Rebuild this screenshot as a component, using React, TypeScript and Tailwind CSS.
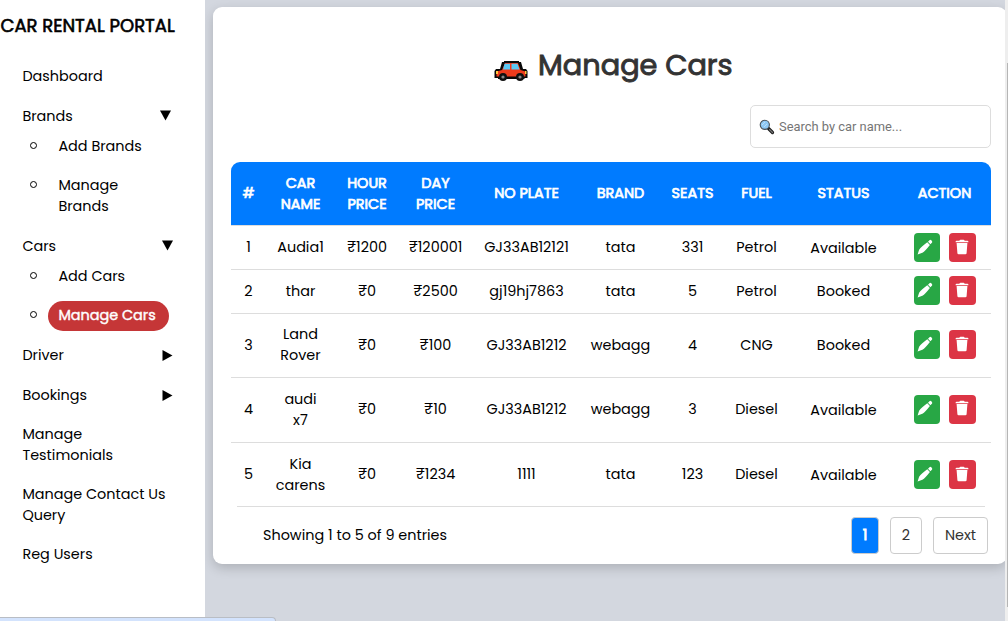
import React from 'react';

const cars = [
  ['1', 'Audia1', '₹1200', '₹120001', 'GJ33AB12121', 'tata', '331', 'Petrol', 'Available'],
  ['2', 'thar', '₹0', '₹2500', 'gj19hj7863', 'tata', '5', 'Petrol', 'Booked'],
  ['3', 'Land\nRover', '₹0', '₹100', 'GJ33AB1212', 'webagg', '4', 'CNG', 'Booked'],
  ['4', 'audi\nx7', '₹0', '₹10', 'GJ33AB1212', 'webagg', '3', 'Diesel', 'Available'],
  ['5', 'Kia\ncarens', '₹0', '₹1234', '1111', 'tata', '123', 'Diesel', 'Available'],
];
const headings = ['#', 'CAR\nNAME', 'HOUR\nPRICE', 'DAY\nPRICE', 'NO PLATE', 'BRAND', 'SEATS', 'FUEL', 'STATUS', 'ACTION'];
const rowHeights = ['h-11', 'h-11', 'h-16', 'h-[65px]', 'h-16'];
const columns = 'grid grid-cols-[35px_70px_62px_75px_107px_81px_63px_65px_109px_93px]';
const cell = 'flex items-center justify-center whitespace-pre text-center';

// Row-specific vertical padding for the text, status and action cells.
const textPad = ['', '', 'pb-px', 'pb-px', ''];
const statusPad = ['pt-px', '', '', 'pt-px', 'pt-px'];
const actionPad = ['', 'pb-0.5', 'pb-0.5', 'pb-0.5', ''];

function Pencil() {
  return (
    <svg viewBox="0 0 16 16" className="mr-1 mb-0.5 h-4 w-4 shrink-0 fill-white">
      <path d="M11 2.8 12.5 1.2Q13.4.4 14.3 1.3L14.9 1.9Q15.7 2.8 14.9 3.7L13.4 5.2ZM10.3 3.3 12.9 5.9Q8.2 11.9 5.4 13.8L.6 15.6 2.1 10.7Q4.4 7.7 10.3 3.3Z" />
    </svg>
  );
}

function Trash() {
  return (
    <svg viewBox="0 0 14 16" className="mr-0.5 mb-0.5 h-4 w-3.5 shrink-0 fill-white">
      <path d="M.6 2.7Q.6 1.7 1.6 1.7H4.4Q4.6.7 5.5.7H8.5Q9.4.7 9.6 1.7H12.4Q13.4 1.7 13.4 2.7V3.2H.6ZM1.6 4H12.4L11.6 14.2Q11.5 15.3 10.4 15.3H3.6Q2.5 15.3 2.4 14.2Z" />
    </svg>
  );
}

function Car() {
  return (
    <svg viewBox="0 0 34 22" className="h-[22px] w-[34px]">
      <path d="M10 1H25V2H27L29 9H32L33.5 11V18H30.5V19H29V20H24V19H12V20H6V19H4V18H.5V11L2 9H6L8 2H10Z" fill="#080808" />
      <path d="M11 3H24L26.5 10L31.5 11.5V16.5H2.5V11.5L8 10Z" fill="#ed3b1c" />
      <path d="M10.5 3.8H16V9.5H9ZM17.5 3.8H23.5L25.5 9.5H17.5Z" fill="#5ac8f5" />
      <circle cx="9" cy="17" r="4" fill="#111" /><circle cx="9" cy="17" r="1.6" fill="#888" />
      <circle cx="26" cy="17" r="4" fill="#111" /><circle cx="26" cy="17" r="1.6" fill="#888" />
      <path d="M2 11H4V14H2ZM31 11H32.5V14H31Z" fill="#ffc83d" />
    </svg>
  );
}

function Magnifier() {
  return (
    <svg viewBox="0 0 16 16" className="h-4 w-4">
      <path d="m9.5 9.5 4 4" stroke="#181818" strokeWidth="3.2" strokeLinecap="round" />
      <path d="m10.5 10.5 3 3" stroke="#777" strokeWidth="1.2" strokeLinecap="round" />
      <circle cx="5.8" cy="5.8" r="4.6" fill="#8ec8f4" stroke="#4a5157" strokeWidth="1.1" />
      <path d="m3 6 3-3M5 8l3-3" stroke="#b9e0fb" />
    </svg>
  );
}

function Arrow({ open }: { open?: boolean }) {
  return (
    <svg viewBox="0 0 11 11" className="h-[11px] w-[11px]">
      <path d={open ? 'M0 .5H11L5.5 10.5Z' : 'M.5 0V11L10.5 5.5Z'} />
    </svg>
  );
}

function Bullet({ children, className }: { children: React.ReactNode; className: string }) {
  return (
    <li className={`flex pl-[30px] ${className}`}>
      <span className="mt-[6px] mr-[21.4px] h-[7px] w-[7px] shrink-0 rounded-full border border-black" />
      {children}
    </li>
  );
}

function Sidebar() {
  return (
    <aside className="h-full w-[205px] shrink-0 bg-white">
      <h1 className="h-[66px] pt-[15px] pl-[0.5px] text-[18px] leading-[22px] whitespace-nowrap [-webkit-text-stroke:0.6px_black]">CAR RENTAL PORTAL</h1>
      <nav>
        <div className="h-10 pl-[22.4px]">Dashboard</div>
        <div className="flex h-[30px] pl-[22.4px]"><span className="w-[137.6px]">Brands</span><span className="pt-1"><Arrow open /></span></div>
        <ul>
          <Bullet className="h-[39px]"><span>Add Brands</span></Bullet>
          <Bullet className="h-[61px]"><span>Manage<br />Brands</span></Bullet>
        </ul>
        <div className="flex h-[30px] pl-[22.4px]"><span className="w-[139.6px]">Cars</span><span className="pt-1"><Arrow open /></span></div>
        <ul>
          <Bullet className="h-[39px]"><span>Add Cars</span></Bullet>
          <Bullet className="h-10"><span className="-mt-1 -ml-[10.4px] flex h-[30px] w-[121px] items-center rounded-full bg-[#c53637] pb-px pl-[10.4px] text-white [-webkit-text-stroke:0.4px_white]">Manage Cars</span></Bullet>
        </ul>
        <div className="flex h-10 pl-[22.4px]"><span className="w-[139.6px]">Driver</span><span className="pt-[5px]"><Arrow /></span></div>
        <div className="flex h-[39px] pl-[22.4px]"><span className="w-[139.6px]">Bookings</span><span className="pt-[5px]"><Arrow /></span></div>
        <div className="h-[60px] pl-[22.4px]">Manage<br />Testimonials</div>
        <div className="h-[60px] pl-[22.4px]">Manage Contact Us<br />Query</div>
        <div className="pl-[22.4px]">Reg Users</div>
      </nav>
    </aside>
  );
}

export default function App() {
  return (
    <div className="relative flex h-[621px] w-[1008px] overflow-hidden bg-[#d3d7df] font-['Poppins',Inter,sans-serif] text-[14.4px] leading-[21px] text-black">
      <Sidebar />
      <main className="h-full w-[800px] overflow-hidden pt-[7px] pl-2">
        <section className="h-[557px] w-[794px] rounded-[9px] bg-white px-[18px] shadow-[0_4px_12px_rgba(0,0,0,0.18)]">
          <header className="flex h-[98px] gap-[10px] pt-[38px] pl-[263px]">
            <span className="pt-[15px]"><Car /></span>
            <h2 className="text-[28.8px] leading-10 whitespace-nowrap text-[#333] [-webkit-text-stroke:0.9px_#333]">Manage Cars</h2>
          </header>
          <div className="flex h-[57px] w-[760px] justify-end">
            <label className="flex h-[43px] w-[241px] items-center gap-1 rounded-[5px] border border-[#ddd] pl-2">
              <Magnifier />
              <input className="w-[190px] font-['Roboto'] text-[12.9px] outline-none placeholder:text-[#757575]" placeholder="Search by car name..." />
            </label>
          </div>
          <div className="w-[760px]">
            <div className={`${columns} h-16 rounded-t-[9px] border-b border-[#ddd] bg-[#007bff] text-white [-webkit-text-stroke:0.7px_white]`}>
              {headings.map((h, j) => <div key={h} className={`${cell} ${j === 1 ? 'pr-px' : ''}`}>{h}</div>)}
            </div>
            {cars.map((row, i) => (
              <div key={row[0]} className={`${columns} ${rowHeights[i]} ${i === 4 ? 'mx-[6px] w-[748px]' : ''} border-b border-[#ddd]`}>
                {row.map((v, j) => (
                  <div key={j} className={`${cell} ${j === 8 ? statusPad[i] : textPad[i]} ${j === 1 ? 'pr-px' : ''} ${i === 4 ? '-translate-x-[6px]' : ''}`}>{v}</div>
                ))}
                <div className={`flex items-center gap-[9px] pl-4 ${actionPad[i]} ${i === 4 ? '-translate-x-[6px]' : ''}`}>
                  <button className="flex h-[29px] w-[26px] items-center justify-center rounded-[4px] bg-[#28a745]"><Pencil /></button>
                  <button className="flex h-[29px] w-[27px] items-center justify-center rounded-[4px] bg-[#dc3545]"><Trash /></button>
                </div>
              </div>
            ))}
          </div>
          <footer className="flex h-[57px] items-center pl-8">
            <span className="w-[588px]">Showing 1 to 5 of 9 entries</span>
            <div className="flex text-[#333]">
              <button className="mr-[11px] h-[37px] w-7 rounded-[4px] border border-[#ccc] bg-[#007bff] text-white [-webkit-text-stroke:0.8px_white]">1</button>
              <button className="mr-[11px] h-[37px] w-8 rounded-[4px] border border-[#ccc]">2</button>
              <button className="h-[37px] w-[55px] rounded-[4px] border border-[#ccc]">Next</button>
            </div>
          </footer>
        </section>
      </main>
      <div className="h-full w-[3px] bg-[#eee] pt-[63px] pl-[2px]"><div className="h-[544px] w-px bg-[#b5b5b5]" /></div>
      <div className="absolute bottom-0 left-0 h-1 w-[276px] rounded-tr-[4px] border-t border-r border-[#b9bdc4] bg-[#d3e3fd]" />
    </div>
  );
}
